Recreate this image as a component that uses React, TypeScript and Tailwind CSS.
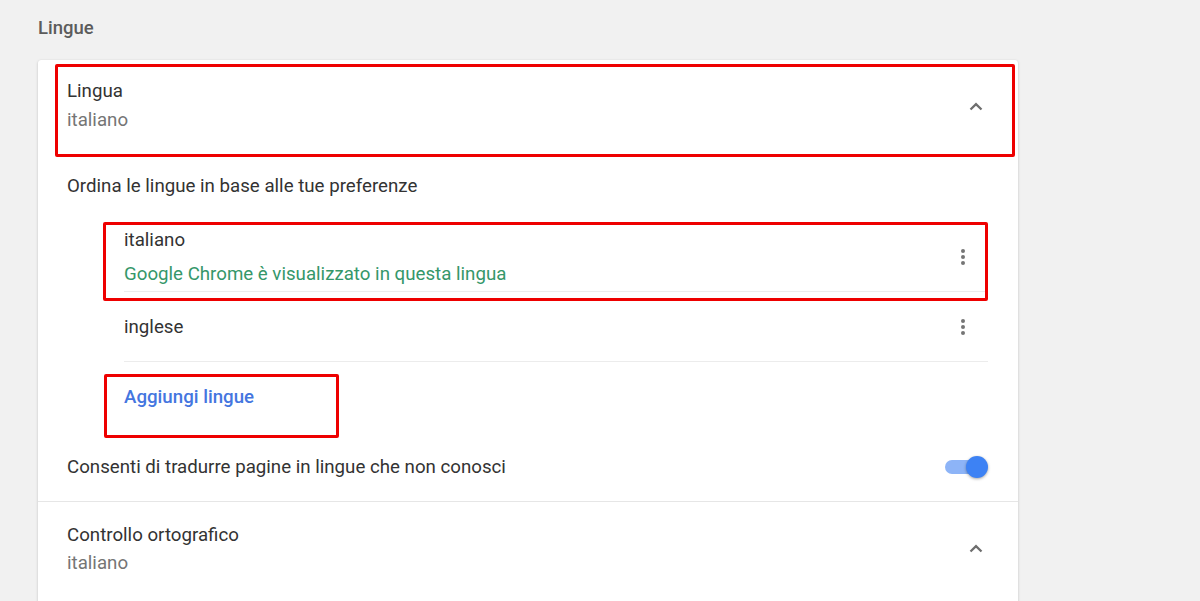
const ChevronUp = () => (
  <svg width="16" height="16" viewBox="0 0 16 16" className="text-[#6e6e6e]">
    <path d="M2.5 10.5 L8 5.2 L13.5 10.5" fill="none" stroke="currentColor" strokeWidth="2.3" />
  </svg>
);

const Kebab = () => (
  <div className="flex w-[6px] flex-col items-center gap-[2px]">
    <span className="h-[4px] w-[4px] rounded-full bg-[#757575]" />
    <span className="h-[4px] w-[4px] rounded-full bg-[#757575]" />
    <span className="h-[4px] w-[4px] rounded-full bg-[#757575]" />
  </div>
);

export default function App() {
  const languages = [
    { name: "italiano", note: "Google Chrome è visualizzato in questa lingua" },
    { name: "inglese", note: "" },
  ];

  return (
    <div
      className="h-[601px] w-[1200px] overflow-hidden bg-[#f1f1f1] text-[18.7px] text-[#333333]"
      style={{ fontFamily: "Roboto, 'Noto Sans', sans-serif" }}
    >
      <div className="pl-[38px] pt-[16px]">
        <h2 className="h-[24px] text-[18.5px] font-medium leading-[24px] text-[#5c5c5c]">Lingue</h2>

        <div className="relative mt-[20px] w-[980px] rounded-t-[3px] bg-white shadow-[0_1px_3px_rgba(0,0,0,0.18),0_0_1px_rgba(0,0,0,0.1)]">
          {/* Lingua header */}
          <div className="flex items-center justify-between pl-[29px] pr-[34px] pt-[19px] pb-[42px]">
            <div>
              <div className="leading-[24px]">Lingua</div>
              <div className="mt-[5px] leading-[24px] text-[#757575]">italiano</div>
            </div>
            <div className="mt-[2px]">
              <ChevronUp />
            </div>
          </div>

          <div className="pl-[29px] leading-[24px]">Ordina le lingue in base alle tue preferenze</div>

          {/* language list */}
          <div className="ml-[86px] mr-[30px] mt-[24px]">
            {languages.map((l) => (
              <div
                key={l.name}
                className="flex h-[70px] items-center justify-between border-b border-[#ececec]"
              >
                <div>
                  <div className="leading-[24px]">{l.name}</div>
                  {l.note && <div className="mt-[10px] leading-[24px] text-[#35976a]">{l.note}</div>}
                </div>
                <div className="mr-[22px]">
                  <Kebab />
                </div>
              </div>
            ))}
            <div className="flex h-[70px] items-center">
              <span className="font-medium text-[#4476df]">Aggiungi lingue</span>
            </div>
          </div>

          <div className="flex h-[70px] items-center justify-between border-b border-[#e6e6e6] pl-[29px] pr-[30px]">
            <span className="leading-[24px]">Consenti di tradurre pagine in lingue che non conosci</span>
            <div className="relative flex h-[24px] w-[44px] items-center">
              <div className="ml-[1px] h-[14px] w-[38px] rounded-full bg-[#8db4f7]" />
              <div className="absolute right-0 top-[1px] h-[22px] w-[22px] rounded-full bg-[#3d82f4] shadow-[0_1px_3px_rgba(0,0,0,0.35)]" />
            </div>
          </div>

          {/* Controllo ortografico */}
          <div className="flex items-center justify-between pl-[29px] pr-[34px] pt-[21px] pb-[40px]">
            <div>
              <div className="leading-[24px]">Controllo ortografico</div>
              <div className="mt-[4px] leading-[24px] text-[#757575]">italiano</div>
            </div>
            <div>
              <ChevronUp />
            </div>
          </div>

          {/* annotation boxes */}
          <div className="absolute left-[17px] top-[4px] h-[93px] w-[960px] rounded-[2px] border-[3px] border-[#ee0000]" />
          <div className="absolute left-[65px] top-[162px] h-[79px] w-[885px] rounded-[2px] border-[3px] border-[#ee0000]" />
          <div className="absolute left-[66px] top-[314px] h-[64px] w-[235px] rounded-[2px] border-[3px] border-[#ee0000]" />
        </div>
      </div>
    </div>
  );
}
